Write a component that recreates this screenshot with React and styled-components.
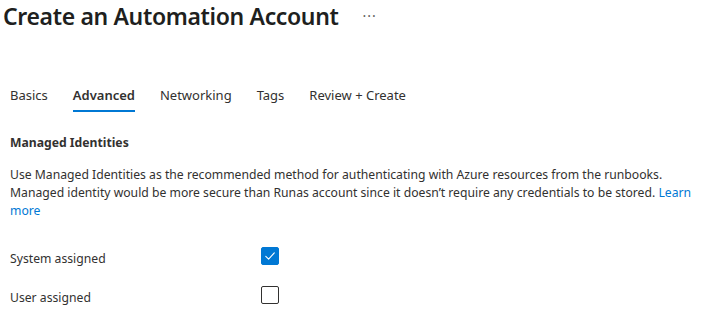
import React, { useState } from 'react'
import styled, { createGlobalStyle } from 'styled-components'

const GlobalStyle = createGlobalStyle`
  body {
    margin: 0;
    background: #fff;
    font-family: 'Noto Sans', 'Open Sans', sans-serif;
    color: #323130;
  }
`

const tabs = ['Basics', 'Advanced', 'Networking', 'Tags', 'Review + Create']

const CheckMark = () => (
  <svg width="12" height="12" viewBox="0 0 12 12" fill="none">
    <path d="M1.8 6.4 L4.6 9.1 L10.3 2.9" stroke="#fff" strokeWidth="1.1" strokeLinecap="round" strokeLinejoin="round" />
  </svg>
)

export default function App() {
  const [active, setActive] = useState('Advanced')
  const [system, setSystem] = useState(true)
  const [user, setUser] = useState(false)

  return (
    <Page>
      <GlobalStyle />
      <Header>
        <Title>Create an Automation Account</Title>
        <More>···</More>
      </Header>
      <Content>
        <TabBar>
          {tabs.map(t => (
            <Tab key={t} $active={t === active} onClick={() => setActive(t)}>
              {t}
            </Tab>
          ))}
        </TabBar>
        <SectionTitle>Managed Identities</SectionTitle>
        <Description>
          Use Managed Identities as the recommended method for authenticating with Azure resources from the runbooks.
          Managed identity would be more secure than Runas account since it doesn’t require any credentials to be stored.{' '}
          <Link href="#">Learn more</Link>
        </Description>
        <Fields>
          <Field>
            <Label>System assigned</Label>
            <Check $checked={system} onClick={() => setSystem(!system)}>
              {system && <CheckMark />}
            </Check>
          </Field>
          <Field>
            <Label>User assigned</Label>
            <Check $checked={user} onClick={() => setUser(!user)}>
              {user && <CheckMark />}
            </Check>
          </Field>
        </Fields>
      </Content>
    </Page>
  )
}

const Page = styled.div`
  width: 701px;
  height: 333px;
  overflow: hidden;
  padding-left: 3px;
  box-sizing: border-box;
`

const Header = styled.div`
  display: flex;
  align-items: center;
  gap: 24px;
  height: 32px;
`

const Title = styled.h1`
  margin: 0;
  font-size: 23px;
  font-weight: 600;
  color: #201f1e;
  line-height: 32px;
  letter-spacing: -0.35px;
`

const More = styled.span`
  font-size: 14px;
  color: #605e5c;
  letter-spacing: 1px;
  line-height: 1;
`

const Content = styled.div`
  padding-left: 7px;
`

const TabBar = styled.div`
  display: flex;
  gap: 25px;
  margin-top: 51px;
`

const Tab = styled.button`
  border: 0;
  background: none;
  padding: 2px 0 5px;
  font-family: inherit;
  font-size: 13px;
  line-height: 20px;
  color: #323130;
  font-weight: ${p => (p.$active ? 600 : 400)};
  border-bottom: 2px solid ${p => (p.$active ? '#0078d4' : 'transparent')};
  cursor: pointer;
`

const SectionTitle = styled.h2`
  margin: 21px 0 0;
  font-size: 12.2px;
  font-weight: 700;
  line-height: 20px;
  color: #323130;
`

const Description = styled.p`
  margin: 13px 0 0;
  font-size: 12.2px;
  line-height: 18px;
  color: #323130;
  max-width: 690px;
`

const Link = styled.a`
  color: #0078d4;
  text-decoration: none;
`

const Fields = styled.div`
  display: flex;
  flex-direction: column;
  margin-top: 16px;
`

const Field = styled.div`
  display: grid;
  grid-template-columns: 251px 18px;
  align-items: center;
  height: 39px;
`

const Label = styled.span`
  font-size: 12.2px;
  color: #323130;
  padding-top: 5px;
`

const Check = styled.span`
  width: 18px;
  height: 18px;
  box-sizing: border-box;
  border-radius: 2px;
  display: flex;
  align-items: center;
  justify-content: center;
  background: ${p => (p.$checked ? '#0078d4' : '#fff')};
  border: 1px solid ${p => (p.$checked ? '#0078d4' : '#323130')};
  cursor: pointer;
`
